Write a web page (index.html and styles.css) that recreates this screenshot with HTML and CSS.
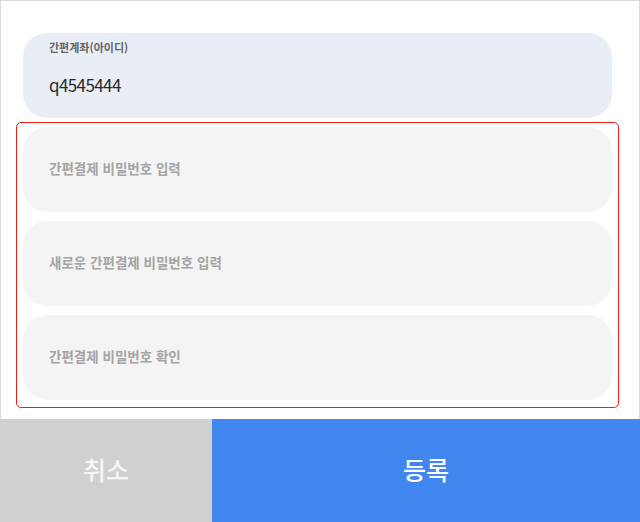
FILE: index.html
```html
<!DOCTYPE html>
<html lang="ko">
<head>
<meta charset="utf-8">
<title>간편결제 비밀번호 변경</title>
<link rel="stylesheet" href="styles.css">
</head>
<body>
<div class="sheet">
  <div class="form">
    <div class="field field-readonly">
      <span class="field-label">간편계좌(아이디)</span>
      <span class="field-value">q4545444</span>
    </div>
    <div class="group">
      <div class="field"><span class="placeholder">간편결제 비밀번호 입력</span></div>
      <div class="field"><span class="placeholder">새로운 간편결제 비밀번호 입력</span></div>
      <div class="field"><span class="placeholder">간편결제 비밀번호 확인</span></div>
    </div>
  </div>
  <div class="actions">
    <button class="btn btn-cancel">취소</button>
    <button class="btn btn-submit">등록</button>
  </div>
</div>
</body>
</html>
```
FILE: styles.css
```css
* { box-sizing: border-box; }

html, body {
  margin: 0;
  padding: 0;
  background: #fff;
  font-family: "Noto Sans CJK KR", "Noto Sans", sans-serif;
}

.sheet {
  width: 640px;
  height: 522px;
  display: flex;
  flex-direction: column;
}

.form {
  height: 419px;
  border: 1px solid #dcdcdc;
  border-bottom: none;
  padding: 32px 27px 0 22px;
  display: flex;
  flex-direction: column;
  gap: 4px;
}

.field {
  height: 85px;
  border-radius: 24px;
  background: #f4f4f4;
  display: flex;
  flex-direction: column;
  justify-content: center;
  padding: 0 26px 3px;
}

.field-readonly {
  background: #e9edf5;
  justify-content: flex-start;
  padding-top: 5px;
}

.field-label {
  font-size: 11px;
  font-weight: 700;
  color: #666;
  line-height: 18px;
}

.field-value {
  font-size: 17px;
  letter-spacing: -0.6px;
  color: #2a2a2a;
  margin-top: 17px;
  line-height: 24px;
}

.placeholder {
  font-size: 13.5px;
  font-weight: 700;
  color: #a4a4a4;
  line-height: 18px;
}

.group {
  margin: 0 -7px;
  border: 1px solid #f01c1c;
  border-radius: 5px;
  padding: 4px 6px 7px;
  display: flex;
  flex-direction: column;
  gap: 9px;
}

.actions {
  flex: 1;
  display: flex;
}

.btn {
  border: none;
  margin: 0;
  padding: 0 0 4px;
  font-family: inherit;
  font-size: 25px;
  font-weight: 500;
  color: #fff;
  cursor: pointer;
}

.btn-cancel {
  width: 212px;
  background: #cfd0d0;
  color: #f6f6f6;
}

.btn-submit {
  flex: 1;
  background: #4287f0;
}
```
